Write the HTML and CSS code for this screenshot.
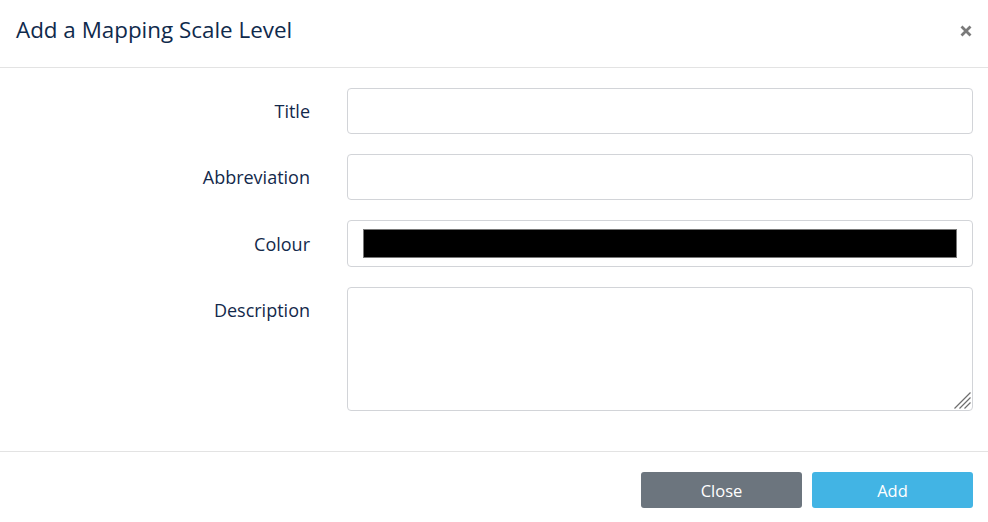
FILE: index.html
```html
<!DOCTYPE html>
<html lang="en">
<head>
<meta charset="utf-8">
<title>Add a Mapping Scale Level</title>
<link rel="stylesheet" href="styles.css">
</head>
<body>
<div class="modal">
  <div class="modal-header">
    <h1 class="modal-title">Add a Mapping Scale Level</h1>
    <button class="close-btn" type="button" aria-label="Close">
      <svg width="12" height="12" viewBox="0 0 12 12"><path d="M1.5 1.5 L10.5 10.5 M10.5 1.5 L1.5 10.5" stroke="#7a7a7a" stroke-width="2.8" stroke-linecap="butt"/></svg>
    </button>
  </div>
  <div class="modal-body">
    <div class="form-row">
      <label class="form-label" for="title">Title</label>
      <input class="form-control" id="title" type="text">
    </div>
    <div class="form-row">
      <label class="form-label" for="abbr">Abbreviation</label>
      <input class="form-control" id="abbr" type="text">
    </div>
    <div class="form-row">
      <label class="form-label">Colour</label>
      <div class="form-control colour-control"><span class="swatch"></span></div>
    </div>
    <div class="form-row form-row-top">
      <label class="form-label form-label-top" for="desc">Description</label>
      <div class="textarea-wrap">
        <textarea class="form-control textarea" id="desc"></textarea>
        <svg class="grip" width="17" height="17" viewBox="0 0 17 17"><path d="M0.5 16.5 L16.5 0.5 M5.5 16.5 L16.5 5.5 M10.5 16.5 L16.5 10.5" stroke="#6e6e6e" stroke-width="1.2"/></svg>
      </div>
    </div>
  </div>
  <div class="modal-footer">
    <button class="btn btn-secondary" type="button">Close</button>
    <button class="btn btn-primary" type="button">Add</button>
  </div>
</div>
</body>
</html>
```
FILE: styles.css
```css
html, body {
  margin: 0;
  padding: 0;
  background: #ffffff;
}
body {
  font-family: "Open Sans", "Noto Sans", sans-serif;
  color: #13294b;
}
.modal {
  width: 988px;
  height: 522px;
  box-sizing: border-box;
  display: flex;
  flex-direction: column;
}
.modal-header {
  height: 68px;
  box-sizing: border-box;
  border-bottom: 1px solid #e3e3e3;
  display: flex;
  align-items: center;
  justify-content: space-between;
  padding: 0 16px 0 16px;
}
.modal-title {
  margin: 0;
  font-size: 22.4px;
  font-weight: 400;
  color: #0f2a4c;
  line-height: 1;
  position: relative;
  top: -3px;
}
.close-btn {
  border: 0;
  background: transparent;
  padding: 0;
  width: 12px;
  height: 12px;
  display: block;
  cursor: pointer;
  position: relative;
  top: -3px;
}
.close-btn svg {
  display: block;
}
.modal-body {
  padding: 20px 15px 40px 0;
  display: flex;
  flex-direction: column;
  gap: 20px;
  border-bottom: 1px solid #e3e3e3;
}
.form-row {
  display: flex;
  align-items: center;
}
.form-row-top {
  align-items: flex-start;
}
.form-label {
  width: 310px;
  flex: 0 0 310px;
  text-align: right;
  padding-right: 37px;
  box-sizing: content-box;
  font-size: 18px;
  color: #13294b;
}
.form-label-top {
  padding-top: 11px;
}
.form-control {
  flex: 1 1 auto;
  height: 46px;
  box-sizing: border-box;
  border: 1px solid #d2d4d8;
  border-radius: 4px;
  background: #fff;
  font-family: inherit;
  font-size: 16px;
  padding: 6px 12px;
  margin: 0;
  outline: none;
}
.colour-control {
  height: 47px;
  padding: 8px 15px 8px 15px;
  display: flex;
}
.swatch {
  flex: 1;
  background: #000;
  border: 1px solid #777;
}
.textarea-wrap {
  flex: 1 1 auto;
  position: relative;
}
.textarea {
  width: 100%;
  height: 124px;
  resize: none;
  display: block;
}
.grip {
  position: absolute;
  right: 2px;
  bottom: 2px;
  display: block;
}
.modal-footer {
  display: flex;
  justify-content: flex-end;
  gap: 10px;
  padding: 20px 15px 0 0;
}
.btn {
  width: 161px;
  height: 36px;
  border: 0;
  border-radius: 3px;
  color: #fff;
  font-family: "Open Sans", "Noto Sans", sans-serif;
  font-size: 16.5px;
  cursor: pointer;
}
.btn-secondary {
  background: #6c757e;
}
.btn-primary {
  background: #42b4e4;
}
```
